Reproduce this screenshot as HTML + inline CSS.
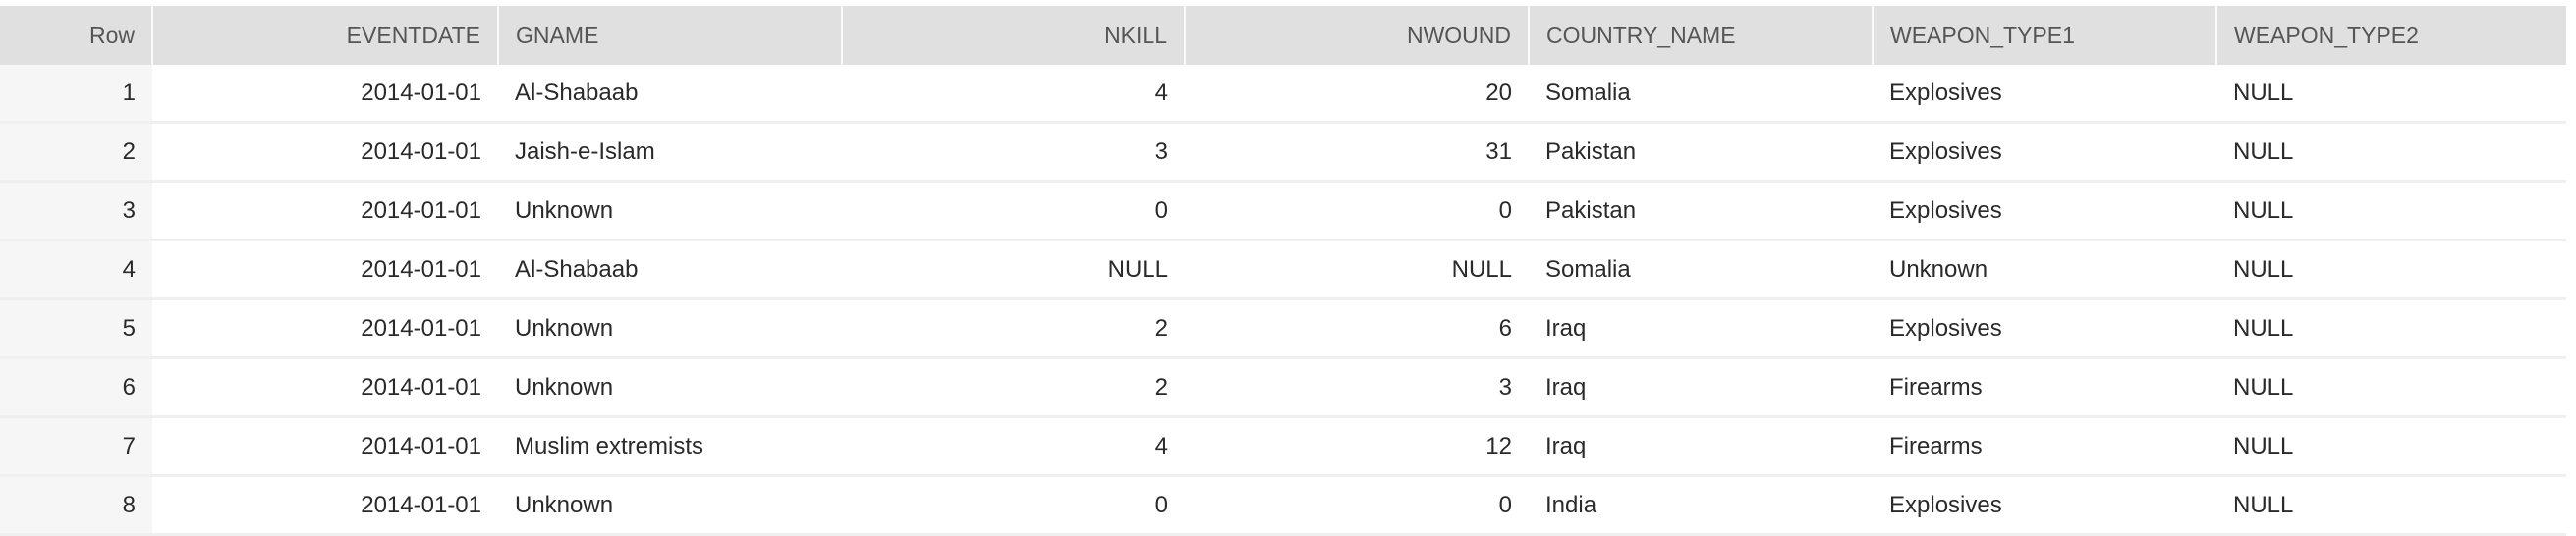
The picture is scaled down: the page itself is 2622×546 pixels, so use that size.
<!DOCTYPE html>
<html><head><style>
body{margin:0;width:2622px;height:516px;overflow:hidden;background:#fff;font-family:"Liberation Sans",sans-serif;position:relative;}
table{position:absolute;left:0;top:6px;border-collapse:collapse;table-layout:fixed;width:2612px;}
td,th{height:57px;padding:0 17px;font-size:24px;color:#2a2a2a;white-space:nowrap;font-weight:normal;text-align:left;border-bottom:3px solid #efefef;box-sizing:content-box;overflow:hidden;}
th{height:60px;background:#e0e0e0;color:#555;border-right:2px solid #fafafa;border-bottom:none;font-size:23px;}
th:last-child{border-right:none;}
td:first-child{background:#f6f6f6;}
.n{text-align:right}
</style></head><body>
<table>
<colgroup><col style="width:155px"><col style="width:352px"><col style="width:350px"><col style="width:349px"><col style="width:350px"><col style="width:350px"><col style="width:350px"><col style="width:356px"></colgroup>
<tr><th class="n">Row</th><th class="n">EVENTDATE</th><th>GNAME</th><th class="n">NKILL</th><th class="n">NWOUND</th><th>COUNTRY_NAME</th><th>WEAPON_TYPE1</th><th>WEAPON_TYPE2</th></tr>
<tr><td class="n">1</td><td class="n">2014-01-01</td><td>Al-Shabaab</td><td class="n">4</td><td class="n">20</td><td>Somalia</td><td>Explosives</td><td>NULL</td></tr>
<tr><td class="n">2</td><td class="n">2014-01-01</td><td>Jaish-e-Islam</td><td class="n">3</td><td class="n">31</td><td>Pakistan</td><td>Explosives</td><td>NULL</td></tr>
<tr><td class="n">3</td><td class="n">2014-01-01</td><td>Unknown</td><td class="n">0</td><td class="n">0</td><td>Pakistan</td><td>Explosives</td><td>NULL</td></tr>
<tr><td class="n">4</td><td class="n">2014-01-01</td><td>Al-Shabaab</td><td class="n">NULL</td><td class="n">NULL</td><td>Somalia</td><td>Unknown</td><td>NULL</td></tr>
<tr><td class="n">5</td><td class="n">2014-01-01</td><td>Unknown</td><td class="n">2</td><td class="n">6</td><td>Iraq</td><td>Explosives</td><td>NULL</td></tr>
<tr><td class="n">6</td><td class="n">2014-01-01</td><td>Unknown</td><td class="n">2</td><td class="n">3</td><td>Iraq</td><td>Firearms</td><td>NULL</td></tr>
<tr><td class="n">7</td><td class="n">2014-01-01</td><td>Muslim extremists</td><td class="n">4</td><td class="n">12</td><td>Iraq</td><td>Firearms</td><td>NULL</td></tr>
<tr><td class="n">8</td><td class="n">2014-01-01</td><td>Unknown</td><td class="n">0</td><td class="n">0</td><td>India</td><td>Explosives</td><td>NULL</td></tr>
</table>
</body></html>
